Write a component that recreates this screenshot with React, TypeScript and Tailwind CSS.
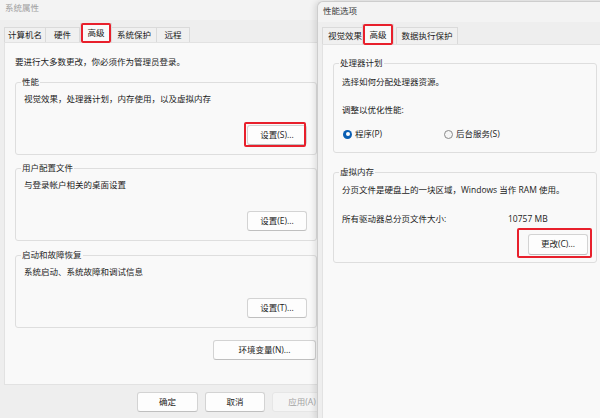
import React from "react";

const font = { fontFamily: '"Open Sans", "Noto Sans CJK SC", sans-serif' };

function RedBox({ className }: { className: string }) {
  return <span className={"pointer-events-none absolute border-2 border-[#e8202c] rounded-[2px] " + className} />;
}

function Btn({ label, className = "", disabled = false }: { label: string; className?: string; disabled?: boolean }) {
  return (
    <div
      className={
        "h-[20px] flex items-center justify-center rounded-[3px] border text-[8.5px] leading-none " +
        (disabled
          ? "bg-[#f5f5f5] border-[#e6e6e6] text-[#a3a3a3] "
          : "bg-[#fdfdfd] border-[#d3d3d3] border-b-[#bfbfbf] text-[#1b1b1b] ") +
        className
      }
    >
      {label}
    </div>
  );
}

function Group({ title, text, button, className = "" }: { title: string; text: string; button: string; className?: string }) {
  return (
    <fieldset className={"w-[302px] border border-[#dedede] rounded-[3px] pl-[8px] pr-[9px] pb-[9px] flex flex-col " + className}>
      <legend className="ml-[-3px] px-[1px] leading-[16px] text-[#262626]">{title}</legend>
      <p className="mt-[1px] leading-[16px]">{text}</p>
      <Btn label={button} className="self-end mt-[18px] w-[60px]" />
    </fieldset>
  );
}

function Tab({ label, className = "", selected = false, children }: { label: string; className?: string; selected?: boolean; children?: React.ReactNode }) {
  return (
    <div
      className={
        "relative flex items-center justify-center border border-b-0 leading-none " +
        (selected
          ? "h-[20px] mb-[-1px] z-10 bg-[#f9f9f9] border-[#dcdcdc] "
          : "h-[15px] bg-[#f0f0f0] border-[#dadada] ") +
        className
      }
    >
      {label}
      {children}
    </div>
  );
}

function SystemProperties() {
  return (
    <div className="w-[334px] h-[418px] flex flex-col bg-[#eeeeee]">
      <div className="h-[20px] bg-[#f3f3f3] pl-[5px] leading-[16px] text-[#a0a0a0]">系统属性</div>
      <div className="h-[22px] flex items-end pl-[4px]">
        <Tab label="计算机名" className="w-[42px]" />
        <Tab label="硬件" className="w-[34px] border-l-0" />
        <Tab label="高级" selected className="w-[32px]">
          <RedBox className="top-[-1px] left-0 right-0 bottom-[0px]" />
        </Tab>
        <Tab label="系统保护" className="w-[45px] border-l-0" />
        <Tab label="远程" className="w-[33px] border-l-0" />
      </div>
      <div className="ml-[4px] w-[328px] h-[343px] border border-[#e2e2e2] bg-[#f9f9f9] pl-[10px] flex flex-col">
        <p className="mt-[11px] leading-[16px]">要进行大多数更改，你必须作为管理员登录。</p>
        <div className="relative mt-[4px]">
          <Group title="性能" text="视觉效果，处理器计划，内存使用，以及虚拟内存" button="设置(S)..." />
          <RedBox className="left-[229px] top-[48px] w-[62px] h-[25px]" />
        </div>
        <Group title="用户配置文件" text="与登录帐户相关的桌面设置" button="设置(E)..." className="mt-[5px]" />
        <Group title="启动和故障恢复" text="系统启动、系统故障和调试信息" button="设置(T)..." className="mt-[6px]" />
        <div className="w-[302px] flex justify-end mt-[12px]">
          <Btn label="环境变量(N)..." className="w-[103px] mr-[1px]" />
        </div>
      </div>
      <div className="mt-[7px] flex gap-[7px] pl-[137px]">
        <Btn label="确定" className="w-[61px]" />
        <Btn label="取消" className="w-[60px]" />
        <Btn label="应用(A)" className="w-[60px]" disabled />
      </div>
    </div>
  );
}

function Radio({ label, checked, className = "" }: { label: string; checked?: boolean; className?: string }) {
  return (
    <div className={"flex items-center gap-[3px] leading-[16px] " + className}>
      {checked ? (
        <span className="w-[9px] h-[9px] rounded-full bg-[#0a5fb4] flex items-center justify-center">
          <span className="w-[4px] h-[4px] rounded-full bg-white" />
        </span>
      ) : (
        <span className="w-[9px] h-[9px] rounded-full border border-[#8a8a8a] bg-[#f6f6f6]" />
      )}
      <span>{label}</span>
    </div>
  );
}

function PerformanceOptions() {
  return (
    <div className="absolute left-[317px] top-[1px] w-[290px] h-[420px] flex flex-col bg-[#eeeeee] border-l border-t border-[#cdcdcd] rounded-tl-[6px] shadow-[-2px_0_6px_rgba(0,0,0,0.12)]">
      <div className="h-[20px] bg-[#f3f3f3] rounded-tl-[6px] pl-[5px] pt-[1px] leading-[16px] text-[#3a3a3a]">性能选项</div>
      <div className="h-[22px] flex items-end pl-[4px]">
        <Tab label="视觉效果" className="w-[42px] h-[17px] justify-start pl-[5px] overflow-hidden" />
        <Tab label="高级" selected className="w-[32px] ml-[-2px] h-[21px]">
          <RedBox className="top-[-1px] left-0 w-[30px] bottom-[0px]" />
        </Tab>
        <Tab label="数据执行保护" className="w-[62px] h-[17px] ml-[2px]" />
      </div>
      <div className="ml-[4px] flex-1 border border-[#e2e2e2] bg-[#f9f9f9] pl-[10px] flex flex-col">
        <fieldset className="mt-[10px] w-[264px] border border-[#dedede] rounded-[3px] pl-[8px] pr-[8px] pb-[10px] flex flex-col">
          <legend className="ml-[-3px] px-[1px] leading-[16px] text-[#262626]">处理器计划</legend>
          <p className="mt-[3px] leading-[16px]">选择如何分配处理器资源。</p>
          <p className="mt-[12px] leading-[16px]">调整以优化性能:</p>
          <div className="mt-[8px] flex items-center pl-[1px]">
            <Radio label="程序(P)" checked className="w-[101px]" />
            <Radio label="后台服务(S)" />
          </div>
        </fieldset>
        <fieldset className="mt-[11px] w-[264px] border border-[#dedede] rounded-[3px] pl-[8px] pr-[8px] pb-[7px] flex flex-col">
          <legend className="ml-[-3px] px-[1px] leading-[16px] text-[#262626]">虚拟内存</legend>
          <p className="mt-[2px] leading-[16px]">分页文件是硬盘上的一块区域，Windows 当作 RAM 使用。</p>
          <div className="mt-[13px] flex leading-[16px]">
            <span className="w-[166px]">所有驱动器总分页文件大小:</span>
            <span>10757 MB</span>
          </div>
          <div className="relative self-end mt-[7px]">
            <Btn label="更改(C)..." className="w-[60px] h-[21px] border-[#8d9cb0] border-b-[#6f839c]" />
            <RedBox className="left-[-11px] top-[-6px] w-[75px] h-[30px]" />
          </div>
        </fieldset>
      </div>
    </div>
  );
}

export default function App() {
  return (
    <div className="relative w-[600px] h-[418px] overflow-hidden bg-[#eeeeee] text-[8.5px] text-[#1b1b1b]" style={font}>
      <SystemProperties />
      <PerformanceOptions />
    </div>
  );
}
